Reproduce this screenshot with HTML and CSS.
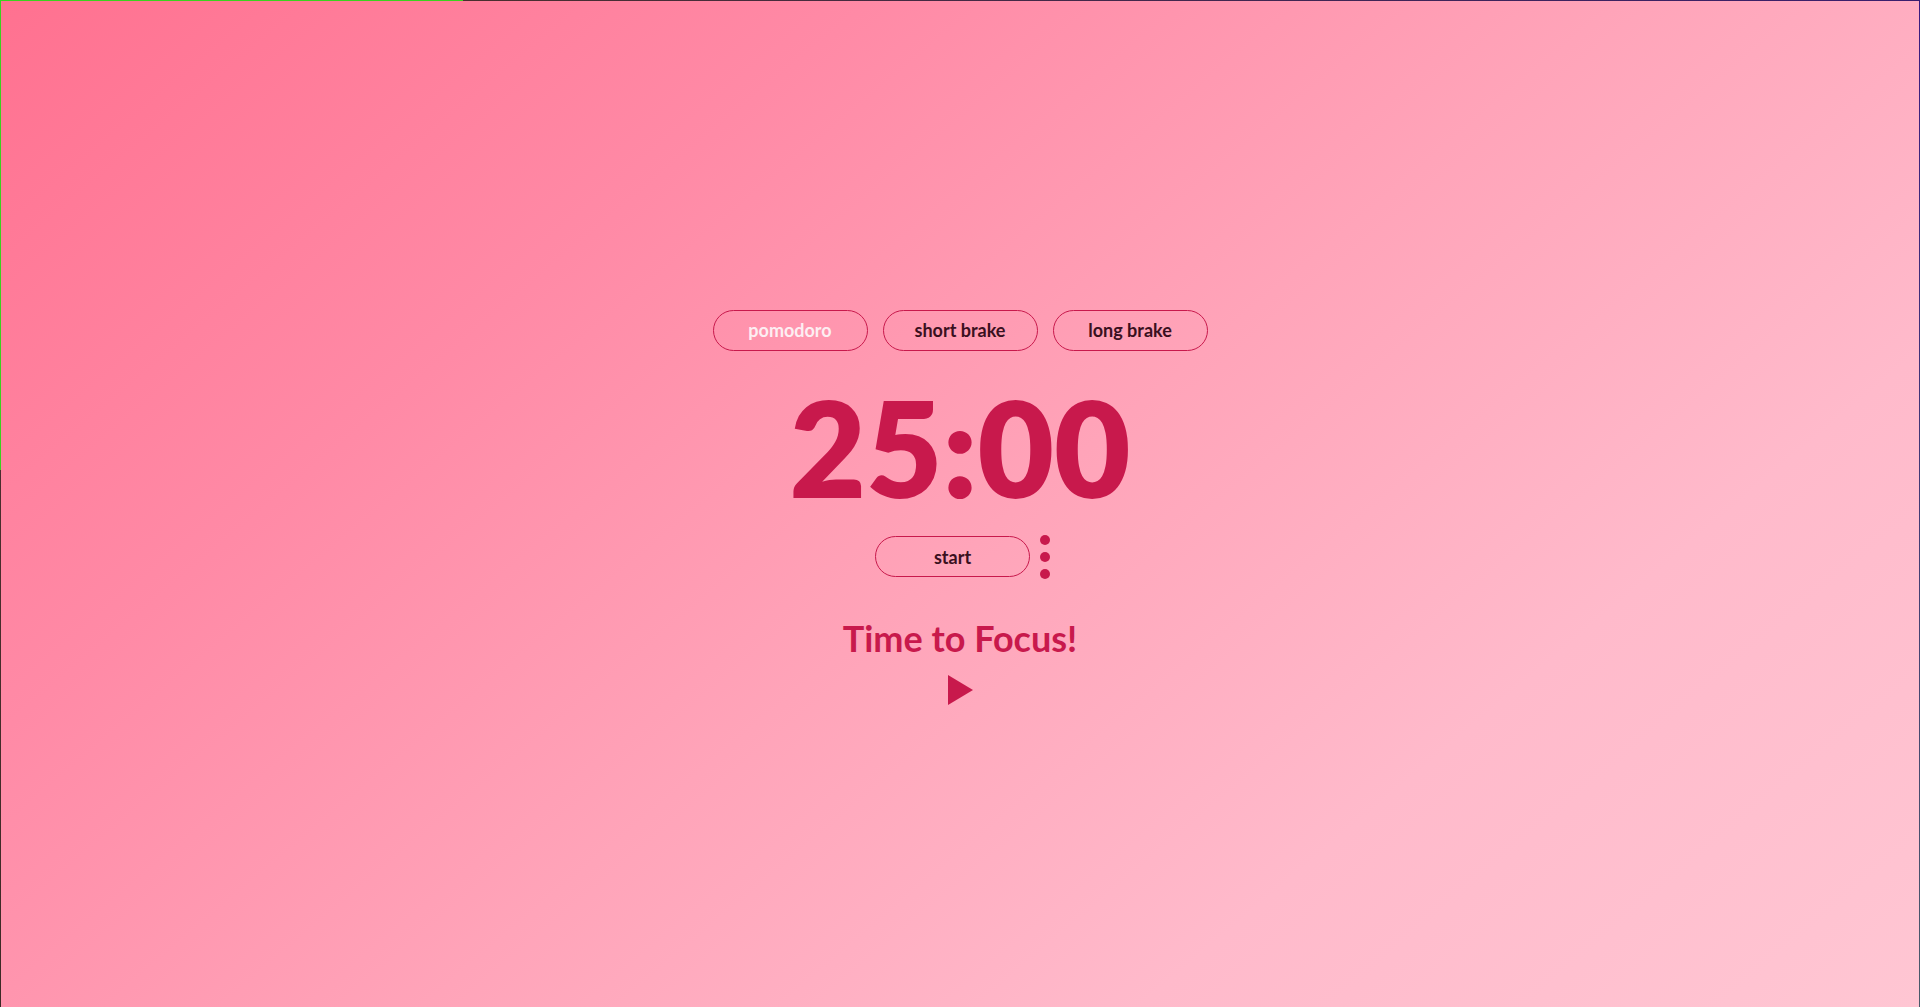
FILE: index.html
```html
<!DOCTYPE html>
<html lang="en">
<head>
<meta charset="utf-8">
<title>Pomodoro</title>
<link rel="stylesheet" href="styles.css">
</head>
<body>
<div class="frame"></div>
<main class="app">
  <nav class="modes">
    <button class="mode active">pomodoro</button>
    <button class="mode">short brake</button>
    <button class="mode">long brake</button>
  </nav>
  <div class="timer">25:00</div>
  <div class="controls">
    <button class="start">start</button>
    <div class="more"><span></span><span></span><span></span></div>
  </div>
  <h1 class="message">Time to Focus!</h1>
  <svg class="play" width="25" height="30" viewBox="0 0 25 30"><polygon points="0,0 25,15 0,30" fill="#c8194c"/></svg>
</main>
</body>
</html>
```
FILE: styles.css
```css
html, body {
  margin: 0;
  height: 100%;
}
body {
  background: linear-gradient(140deg, #ff7190 0%, #ff8aa6 28%, #ffa4b9 52%, #ffbacb 75%, #ffc6d3 100%);
  font-family: "Lato", "Noto Sans", sans-serif;
  overflow: hidden;
}
.frame {
  position: fixed;
  inset: 0;
  pointer-events: none;
  background:
    linear-gradient(to right, #3bd11f 0, #3bd11f 463px, #4a2e2e 463px, #3a1e6e 100%) top left / 100% 1px no-repeat,
    linear-gradient(to bottom, #3bd11f 0, #3bd11f 470px, #4a2e2e 470px, #3d2a26 100%) top left / 1px 100% no-repeat,
    linear-gradient(to bottom, #3a1a80 0, #4a5a6a 100%) top right / 1px 100% no-repeat;
}
.app {
  height: 100%;
  box-sizing: border-box;
  padding-top: 3px;
  display: flex;
  flex-direction: column;
  align-items: center;
  justify-content: center;
}
.modes {
  display: flex;
  gap: 15px;
  margin-top: 4px;
}
button {
  font-family: inherit;
  cursor: pointer;
}
.mode, .start {
  width: 155px;
  height: 41px;
  border: 1px solid #c8194c;
  border-radius: 21px;
  background: transparent;
  font-size: 18px;
  font-weight: 700;
  color: #3a1020;
  padding: 0;
}
.mode.active {
  color: #fdeef2;
}
.timer {
  margin-top: 30px;
  font-size: 132px;
  line-height: 1;
  font-weight: 800;
  color: #c8194c;
}
.controls {
  margin-top: 22px;
  display: flex;
  align-items: center;
  gap: 10px;
  margin-left: 5px;
}
.more {
  display: flex;
  flex-direction: column;
  gap: 7px;
}
.more span {
  width: 10px;
  height: 10px;
  border-radius: 50%;
  background: #c8194c;
}
.message {
  margin: 41px 0 0;
  font-size: 36px;
  line-height: 1;
  font-weight: 700;
  color: #c8194c;
}
.play {
  margin-top: 19px;
  display: block;
}
```
